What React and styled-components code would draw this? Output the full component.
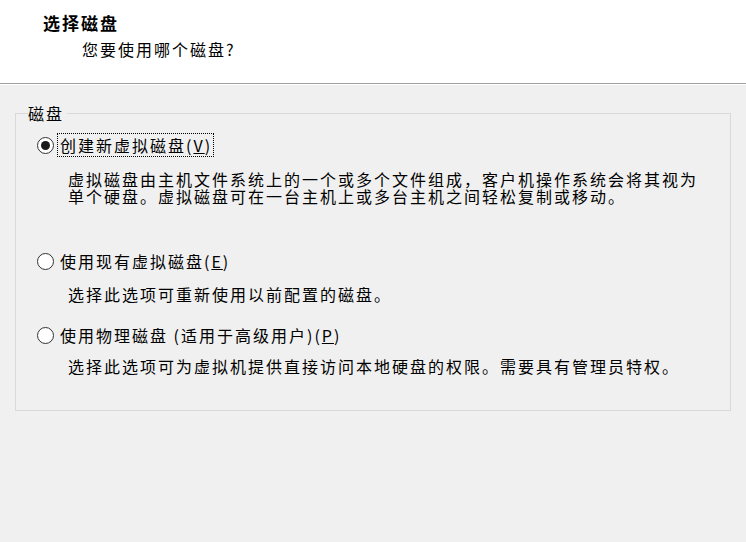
import React from "react"
import styled, { createGlobalStyle, css } from "styled-components"

const GlobalStyle = createGlobalStyle`
  html, body {
    margin: 0;
    padding: 0;
    background: #f0f0f0;
  }
  body {
    font-family: "Noto Sans CJK SC", "Noto Sans", sans-serif;
    color: #000;
  }
`

const Page = styled.div`
  width: 746px;
  height: 542px;
  background: #f0f0f0;
  overflow: hidden;
`

const Header = styled.div`
  height: 84px;
  box-sizing: border-box;
  background: #fff;
  border-bottom: 1px solid #a0a0a0;
  box-shadow: 0 1px 0 #fff;
  padding: 12px 0 0 43px;
`

const Title = styled.div`
  font-size: 17px;
  font-weight: bold;
  letter-spacing: 2px;
  line-height: 22px;
`

const Subtitle = styled.div`
  font-size: 16px;
  letter-spacing: 2px;
  line-height: 22px;
  margin: 4px 0 0 39px;
`

const Body = styled.div`
  padding: 0 15px;
`

const GroupBox = styled.fieldset`
  box-sizing: border-box;
  width: 716px;
  height: 307px;
  margin: 20px 0 0;
  padding: 11px 0 0;
  border: 1px solid #d9d9d9;
  min-width: 0;
`

const Legend = styled.legend`
  font-size: 16px;
  letter-spacing: 2px;
  line-height: 18px;
  padding: 0 3px 0 0;
  margin-left: 12px;
`

const OptionRow = styled.label`
  display: flex;
  align-items: center;
  gap: 3px;
  height: 24px;
  padding-left: 21px;
  margin-top: ${p => p.$top || 0}px;
  font-size: 16px;
  letter-spacing: 2px;
`

const Radio = styled.span`
  position: relative;
  flex: none;
  width: 15px;
  height: 15px;
  border: 1px solid #333;
  border-radius: 50%;
  background: #fff;
  ${p => p.$checked && css`
    &::after {
      content: "";
      position: absolute;
      left: 3px;
      top: 3px;
      width: 9px;
      height: 9px;
      border-radius: 50%;
      background: #1a1a1a;
    }
  `}
`

const OptionText = styled.span`
  padding: 0 1px 0 2px;
  line-height: 22px;
  border: 1px solid transparent;
  ${p => p.$focused && css`
    border: 1px dotted #000;
  `}
`

const Desc = styled.div`
  padding-left: 52px;
  margin-top: ${p => p.$top || 0}px;
  font-size: 16px;
  letter-spacing: 2px;
  line-height: 17px;
`

const options = [
  {
    label: "创建新虚拟磁盘(", key: "V",
    desc: ["虚拟磁盘由主机文件系统上的一个或多个文件组成，客户机操作系统会将其视为", "单个硬盘。虚拟磁盘可在一台主机上或多台主机之间轻松复制或移动。"],
    top: 0, descTop: 14, checked: true,
  },
  {
    label: "使用现有虚拟磁盘(", key: "E",
    desc: ["选择此选项可重新使用以前配置的磁盘。"],
    top: 44, descTop: 13,
  },
  {
    label: "使用物理磁盘 (适用于高级用户)(", key: "P",
    desc: ["选择此选项可为虚拟机提供直接访问本地硬盘的权限。需要具有管理员特权。"],
    top: 20, descTop: 11,
  },
]

export default function App() {
  return (
    <Page>
      <GlobalStyle />
      <Header>
        <Title>选择磁盘</Title>
        <Subtitle>您要使用哪个磁盘?</Subtitle>
      </Header>
      <Body>
        <GroupBox>
          <Legend>磁盘</Legend>
          {options.map(o => (
            <React.Fragment key={o.key}>
              <OptionRow $top={o.top}>
                <Radio $checked={o.checked} />
                <OptionText $focused={o.checked}>
                  {o.label}<u>{o.key}</u>)
                </OptionText>
              </OptionRow>
              <Desc $top={o.descTop}>
                {o.desc.map(line => <div key={line}>{line}</div>)}
              </Desc>
            </React.Fragment>
          ))}
        </GroupBox>
      </Body>
    </Page>
  )
}
